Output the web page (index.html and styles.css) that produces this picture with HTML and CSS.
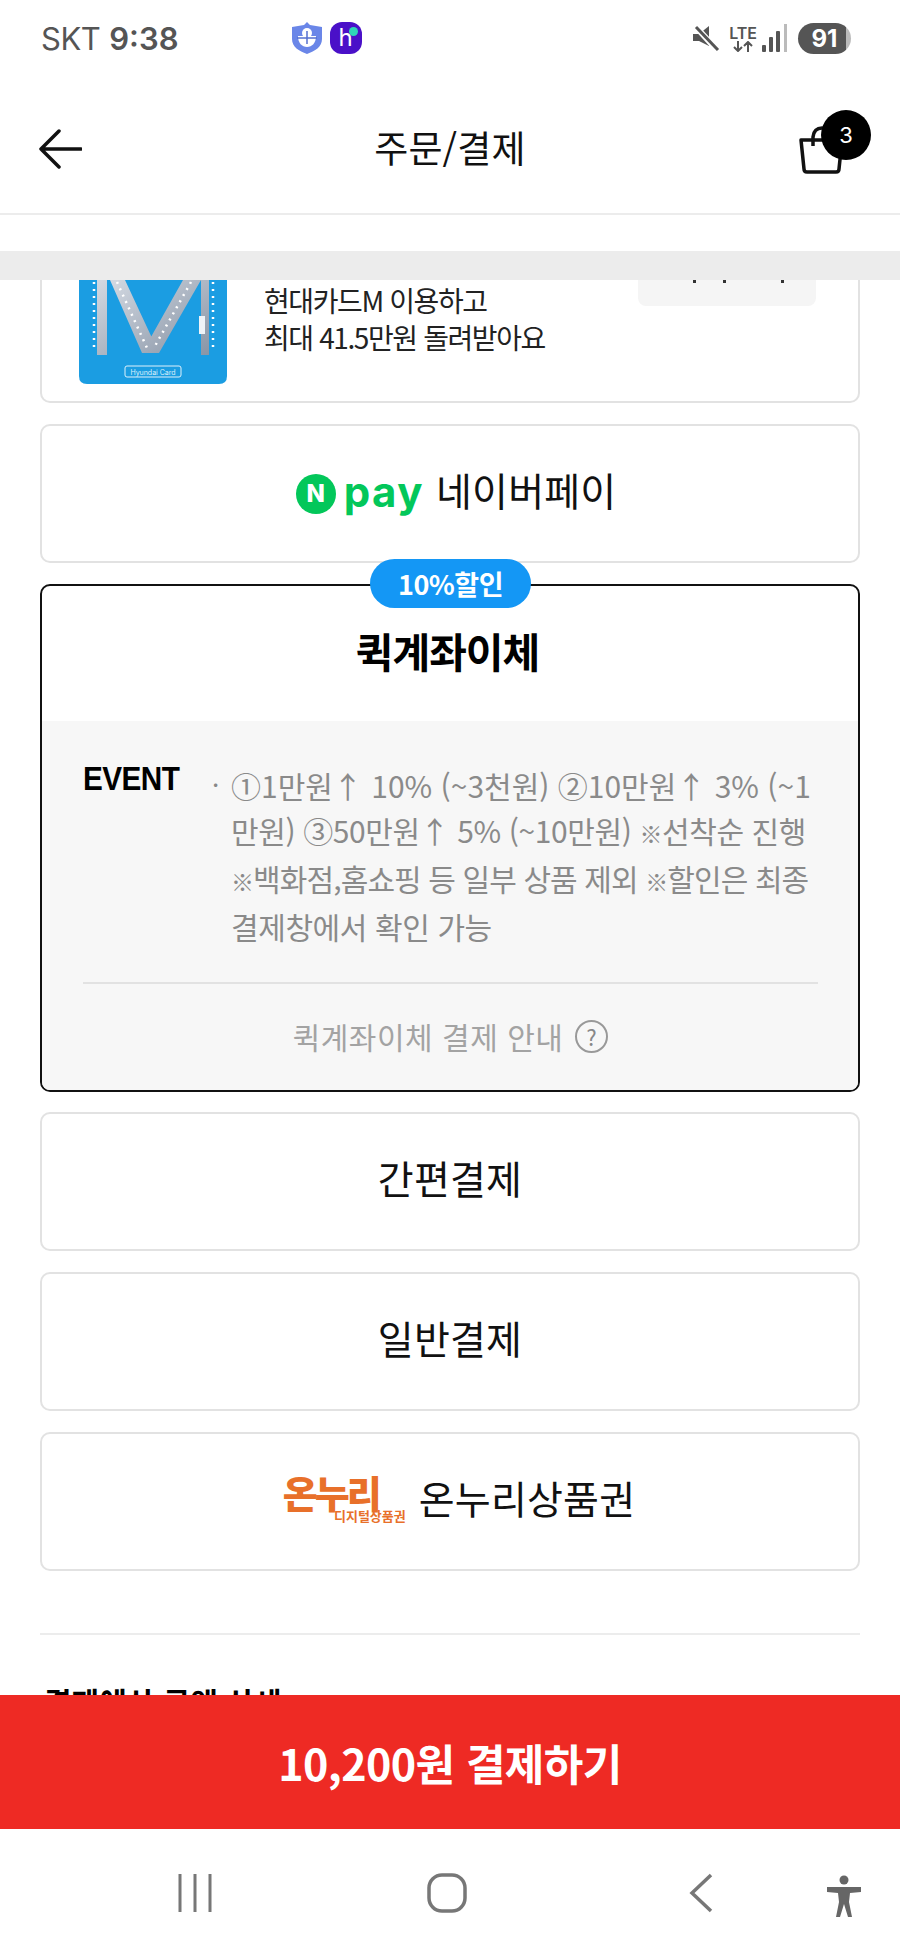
FILE: index.html
```html
<!DOCTYPE html>
<html lang="ko">
<head>
<meta charset="utf-8">
<title>주문/결제</title>
<link rel="stylesheet" href="styles.css">
</head>
<body>
<div class="page">

  <div class="status">
    <span class="carrier">SKT</span>
    <span class="clock">9:38</span>
    <svg class="noti shield" width="30" height="32" viewBox="0 0 30 32">
      <path d="M15 0l3 3 12 2v12c0 8-7 12-15 15C7 29 0 25 0 17V5l12-2z" fill="#6a86e8"/>
      <path d="M6 14h18c0 7-4 11-9 11s-9-4-9-11z" fill="#fff"/>
      <circle cx="15" cy="11" r="5" fill="#fff"/>
      <path d="M5 16h20M15 9v13" stroke="#5670d0" stroke-width="1.5"/>
    </svg>
    <span class="noti happ">h<i class="happ_dot"></i></span>
    <div class="status_right">
      <svg width="28" height="26" viewBox="0 0 28 26">
        <path d="M1 9h6l10-8v20L7 16H1z" fill="#555"/>
        <path d="M4 2l21 23" stroke="#fff" stroke-width="6"/>
        <path d="M4 2l22 23" stroke="#555" stroke-width="3"/>
      </svg>
      <div class="lte">
        <span class="lte_text">LTE</span>
        <svg width="20" height="11" viewBox="0 0 20 11">
          <path d="M5 0v10M1 6l4 4 4-4M15 11V1M11 5l4-4 4 4" fill="none" stroke="#555" stroke-width="2"/>
        </svg>
      </div>
      <svg class="signal" width="26" height="28" viewBox="0 0 26 28">
        <rect x="0" y="21" width="4" height="7" rx="1" fill="#555"/>
        <rect x="7" y="13" width="4" height="15" rx="1" fill="#555"/>
        <rect x="14" y="7" width="4" height="21" rx="1" fill="#555"/>
        <rect x="22" y="0" width="3" height="28" fill="#bbb"/>
      </svg>
      <span class="battery">91</span>
    </div>
  </div>

  <div class="header">
    <svg class="back_icon" width="44" height="40" viewBox="0 0 44 40">
      <path d="M43 20H3M21 2L3 20l18 18" fill="none" stroke="#111" stroke-width="3.5" stroke-linecap="round" stroke-linejoin="round"/>
    </svg>
    <h1 class="title">주문/결제</h1>
    <div class="cart">
      <svg width="46" height="48" viewBox="0 0 46 48">
        <path d="M2 14h41l-3 29q0 3-3 3H8q-3 0-3-3z" fill="none" stroke="#111" stroke-width="3.5" stroke-linejoin="round"/>
        <path d="M14 20v-9q1-9 9-9t9 9v9" fill="none" stroke="#111" stroke-width="3.5"/>
      </svg>
      <span class="cart_count">3</span>
    </div>
  </div>

  <div class="band"></div>

  <div class="scroll">
    <div class="card card_promo">
      <svg class="promo_card" width="148" height="104" viewBox="0 0 148 104">
        <defs>
          <linearGradient id="silver" x1="0" y1="0" x2="1" y2="1">
            <stop offset="0" stop-color="#d3d9e2"/>
            <stop offset="1" stop-color="#8995a6"/>
          </linearGradient>
        </defs>
        <path d="M0 0h148v96q0 8-8 8H8q-8 0-8-8z" fill="#1b9de2"/>
        <path d="M18 0h10v75H18zM122 0h8v75h-8z" fill="url(#silver)"/>
        <path d="M31 0h15l34 73H63zM104 0h18L80 73H63z" fill="url(#silver)"/>
        <path d="M15 2v70M134 2v70M38 2l30 66M112 2L76 66" stroke="#fff" stroke-width="2.5" stroke-dasharray="2 5" fill="none"/>
        <rect x="120" y="36" width="6" height="18" fill="#eef3f8"/>
        <rect x="46" y="86" width="56" height="11" rx="2" fill="none" stroke="#dff1fb" stroke-width="1"/>
        <text class="promo_label" x="74" y="94.5" text-anchor="middle">Hyundai Card</text>
      </svg>
      <p class="promo_text">현대카드M 이용하고<br>최대 41.5만원 돌려받아요</p>
      <div class="promo_chip"><i class="chip_dot"></i><i class="chip_dot"></i><i class="chip_dot chip_dot_far"></i></div>
    </div>

    <div class="card pay_row">
      <span class="npay_n">N</span>
      <span class="npay_word">pay</span>
      <span class="pay_name npay_name">네이버페이</span>
    </div>

    <div class="card card_quick">
      <span class="sale_badge">10%할인</span>
      <h2 class="quick_title">퀵계좌이체</h2>
      <div class="quick_info">
        <div class="event">
          <strong class="event_label">EVENT</strong>
          <span class="event_dot">·</span>
          <p class="event_text">
            <span class="line line_wide">①1만원↑ 10% (~3천원) ②10만원↑ 3% (~1</span>
            <span class="line">만원) ③50만원↑ 5% (~10만원) <span class="mark">※</span>선착순 진행</span>
            <span class="line line_tight"><span class="mark">※</span>백화점,홈쇼핑 등 일부 상품 제외 <span class="mark">※</span>할인은 최종</span>
            <span class="line">결제창에서 확인 가능</span>
          </p>
        </div>
        <div class="guide">
          <span>퀵계좌이체 결제 안내</span>
          <span class="help">?</span>
        </div>
      </div>
    </div>

    <div class="card pay_row"><span class="pay_name">간편결제</span></div>
    <div class="card pay_row"><span class="pay_name">일반결제</span></div>

    <div class="card pay_row">
      <div class="onnuri">
        <span class="onnuri_big">온누리</span>
        <span class="onnuri_small">디지털상품권</span>
      </div>
      <span class="pay_name">온누리상품권</span>
    </div>

    <div class="rule"></div>
    <h3 class="next_title">결제예상 금액 상세</h3>
  </div>

  <div class="paybar">10,200원 결제하기</div>

  <div class="nav">
    <svg class="nav_recent" width="34" height="38" viewBox="0 0 34 38">
      <path d="M2 0v38M17 0v38M32 0v38" stroke="#777" stroke-width="3"/>
    </svg>
    <svg class="nav_home" width="40" height="40" viewBox="0 0 40 40">
      <rect x="2" y="2" width="36" height="36" rx="13" fill="none" stroke="#777" stroke-width="3.5"/>
    </svg>
    <svg class="nav_back" width="24" height="40" viewBox="0 0 24 40">
      <path d="M22 2L3 20l19 18" fill="none" stroke="#777" stroke-width="3.5"/>
    </svg>
    <svg class="nav_person" width="34" height="42" viewBox="0 0 34 42">
      <circle cx="17" cy="5" r="4.5" fill="#666"/>
      <path d="M0 12h34v5l-11 1-1 9 3 15h-4l-4-13-4 13H9l3-15-1-9-11-1z" fill="#666"/>
    </svg>
  </div>

</div>
</body>
</html>
```

FILE: styles.css
```css
html, body {
  margin: 0;
  padding: 0;
  background: #fff;
}

.page {
  width: 900px;
  height: 1950px;
  display: flex;
  flex-direction: column;
  overflow: hidden;
  font-family: "Noto Sans CJK KR", "Noto Sans", sans-serif;
  color: #111;
}

/* status bar */
.status {
  height: 76px;
  flex: none;
  display: flex;
  align-items: center;
  padding: 0 49px 0 41px;
  box-sizing: border-box;
  color: #555;
  font-family: Inter, sans-serif;
  font-size: 31px;
}

.carrier {
  letter-spacing: -0.5px;
}

.clock {
  margin-left: 9px;
  font-weight: 600;
}

.noti {
  flex: none;
}

.shield {
  margin-left: 113px;
}

.happ {
  position: relative;
  width: 32px;
  height: 32px;
  margin-left: 8px;
  border-radius: 12px;
  background: #4a10c8;
  color: #fff;
  font-size: 24px;
  line-height: 32px;
  text-align: center;
}

.happ_dot {
  position: absolute;
  top: 5px;
  right: 4px;
  width: 9px;
  height: 9px;
  border-radius: 50%;
  background: #2fd6b8;
}

.status_right {
  margin-left: auto;
  display: flex;
  align-items: center;
}

.lte {
  display: flex;
  flex-direction: column;
  align-items: center;
  margin-left: 9px;
}

.lte_text {
  font-size: 16px;
  font-weight: 600;
  line-height: 16px;
}

.signal {
  margin-left: 5px;
}

.battery {
  width: 53px;
  height: 31px;
  margin-left: 10px;
  border-radius: 16px;
  background: linear-gradient(to right, #555 91%, #bbb 91%);
  color: #fff;
  font-size: 24px;
  font-weight: 700;
  line-height: 31px;
  text-align: center;
}

/* header */
.header {
  height: 139px;
  flex: none;
  display: grid;
  grid-template-columns: 1fr auto 1fr;
  align-items: center;
  box-sizing: border-box;
  border-bottom: 2px solid #ececec;
}

.back_icon {
  margin: 9px 0 0 38px;
}

.title {
  margin: 5px 0 0 0;
  font-size: 37px;
  font-weight: 400;
  letter-spacing: 0.2px;
}

.cart {
  position: relative;
  justify-self: end;
  margin-right: 55px;
  margin-top: 10px;
  height: 48px;
}

.cart_count {
  position: absolute;
  top: -16px;
  left: 22px;
  width: 50px;
  height: 50px;
  border-radius: 50%;
  background: #000;
  color: #fff;
  font-family: Inter, sans-serif;
  font-size: 22px;
  line-height: 50px;
  text-align: center;
}

.band {
  height: 29px;
  flex: none;
  margin-top: 36px;
  background: #ececec;
}

/* scrolling list */
.scroll {
  flex: 1;
  min-height: 0;
  overflow: hidden;
  padding: 0 40px;
}

.card {
  box-sizing: border-box;
  border: 2px solid #e2e2e2;
  border-radius: 10px;
  margin-bottom: 21px;
  background: #fff;
}

.card_promo {
  height: 123px;
  display: flex;
  align-items: flex-start;
  padding-left: 37px;
  border-top: 0;
  border-top-left-radius: 0;
  border-top-right-radius: 0;
}

.promo_card {
  flex: none;
}

.promo_label {
  fill: #dff1fb;
  font-family: Inter, sans-serif;
  font-size: 7px;
}

.promo_text {
  margin: 0 0 0 37px;
  padding-top: 2px;
  font-size: 28px;
  line-height: 37px;
  letter-spacing: -1.4px;
  color: #222;
}

.promo_chip {
  flex: none;
  display: flex;
  align-items: flex-start;
  width: 178px;
  height: 26px;
  margin-left: auto;
  margin-right: 42px;
  padding-left: 55px;
  box-sizing: border-box;
  border-radius: 0 0 8px 8px;
  background: #f5f5f5;
}

.chip_dot {
  width: 3px;
  height: 3px;
  margin-right: 27px;
  background: #333;
}

.chip_dot_far {
  margin-left: 28px;
}

.pay_row {
  height: 139px;
  display: flex;
  align-items: center;
  justify-content: center;
}

.pay_name {
  margin-top: -9px;
  font-size: 39px;
  letter-spacing: 0.2px;
}

.npay_n {
  width: 40px;
  height: 40px;
  margin-left: 12px;
  border-radius: 50%;
  background: #03c75a;
  color: #fff;
  font-family: Inter, sans-serif;
  font-size: 24px;
  font-weight: 800;
  line-height: 40px;
  text-align: center;
}

.npay_word {
  margin: -4px 0 0 8px;
  color: #03c75a;
  font-family: Inter, sans-serif;
  font-size: 42px;
  font-weight: 700;
  line-height: 40px;
  letter-spacing: 1.5px;
}

.npay_name {
  margin-left: 12px;
}

/* selected method */
.card_quick {
  position: relative;
  height: 508px;
  margin-bottom: 20px;
  border-color: #111;
  display: flex;
  flex-direction: column;
}

.sale_badge {
  position: absolute;
  top: -27px;
  left: 328px;
  width: 161px;
  height: 49px;
  border-radius: 25px;
  background: #1497f5;
  color: #fff;
  font-size: 27px;
  font-weight: 700;
  line-height: 49px;
  text-align: center;
  letter-spacing: -0.5px;
}

.quick_title {
  height: 135px;
  flex: none;
  margin: 0;
  padding-right: 5px;
  box-sizing: border-box;
  font-size: 41px;
  font-weight: 700;
  line-height: 129px;
  text-align: center;
  letter-spacing: -1px;
  color: #000;
}

.quick_info {
  flex: 1;
  display: flex;
  flex-direction: column;
  padding: 0 40px 0 41px;
  border-radius: 0 0 8px 8px;
  background: #f7f7f7;
}

.event {
  display: flex;
  align-items: flex-start;
  height: 263px;
  flex: none;
  padding-top: 40px;
  box-sizing: border-box;
  border-bottom: 2px solid #e2e2e2;
}

.event_label {
  width: 129px;
  flex: none;
  font-family: "Liberation Sans", sans-serif;
  font-size: 33px;
  font-weight: 700;
  line-height: 36px;
  letter-spacing: -0.6px;
  color: #000;
  transform: scaleX(0.9);
  transform-origin: left;
}

.event_dot {
  width: 19px;
  flex: none;
  color: #888;
  font-size: 26px;
  line-height: 46px;
}

.event_text {
  margin: 2px 0 0 0;
  width: 587px;
  color: #8a8a8a;
  font-size: 30px;
  line-height: 45px;
  letter-spacing: -0.4px;
}

.line {
  display: block;
  white-space: nowrap;
}

.line_wide {
  letter-spacing: 0;
}

.line_tight {
  letter-spacing: -0.9px;
}

.mark {
  font-size: 23px;
}

.guide {
  flex: 1;
  display: flex;
  align-items: center;
  justify-content: center;
  gap: 12px;
  padding-bottom: 2px;
  color: #a3a3a3;
  font-size: 30px;
  letter-spacing: 0.5px;
}

.help {
  width: 29px;
  height: 29px;
  border: 2px solid #999;
  border-radius: 50%;
  color: #888;
  font-size: 22px;
  line-height: 29px;
  text-align: center;
}

/* onnuri logo */
.onnuri {
  display: flex;
  flex-direction: column;
  align-items: flex-end;
  width: 123px;
  margin: -6px 13px 0 18px;
  color: #e8702a;
}

.onnuri_big {
  font-size: 38px;
  font-weight: 900;
  line-height: 34px;
  letter-spacing: -3px;
  align-self: flex-start;
}

.onnuri_small {
  font-size: 13px;
  font-weight: 700;
  line-height: 14px;
}

.rule {
  height: 2px;
  margin-top: 62px;
  background: #ececec;
}

.next_title {
  margin: 44px 0 0 4px;
  font-size: 30px;
  font-weight: 700;
  line-height: 44px;
  color: #000;
}

/* bottom */
.paybar {
  height: 134px;
  flex: none;
  background: #ee2a24;
  color: #fff;
  font-size: 43px;
  font-weight: 700;
  line-height: 134px;
  text-align: center;
  letter-spacing: -0.6px;
}

.nav {
  height: 121px;
  flex: none;
  display: flex;
  align-items: flex-start;
  padding: 45px 0 0 178px;
  box-sizing: border-box;
}

.nav_home {
  margin-left: 215px;
  margin-top: -1px;
}

.nav_back {
  margin-left: 222px;
  margin-top: -1px;
}

.nav_person {
  margin-left: 114px;
  margin-top: 1px;
}
```
